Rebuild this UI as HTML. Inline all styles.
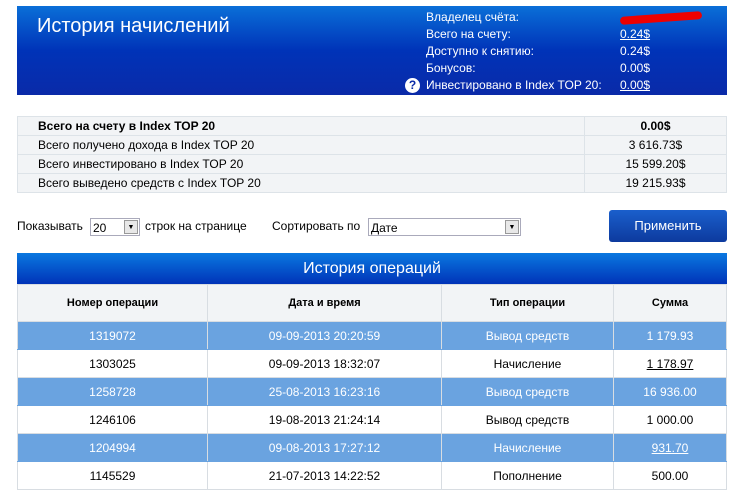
<!DOCTYPE html><html><head><meta charset="utf-8"><style>
body{margin:0;background:#fff;font-family:"Liberation Sans",Arial,sans-serif;font-size:12px;color:#000;width:739px;height:489px;overflow:hidden;position:relative}
.hdr{position:absolute;left:17px;top:6px;width:710px;height:89px;background:linear-gradient(#0a6fd8,#0033b8 50%,#0a2aa8)}
.hdr h1{position:absolute;left:20px;top:9px;margin:0;font-weight:normal;font-size:20px;color:#fff}
.info{position:absolute;left:409px;top:3px;color:#fff;font-size:12px;line-height:17px}
.info div{position:relative;height:17px}
.info span.v{position:absolute;left:194px}
.u{text-decoration:underline}
.q{position:absolute;left:-21px;top:1px;width:15px;height:15px;border-radius:50%;background:#fff;color:#0a2aa8;font-weight:bold;font-size:12px;text-align:center;line-height:15px}
.sum{position:absolute;left:17px;top:116px;width:710px;border-collapse:collapse}
.sum td{border:1px solid #dde3e8;background:#f2f4f6;height:18px;padding:0 0 0 20px;font-size:12px}
.sum td.r{text-align:center;width:141px;padding:0}
.ctl{position:absolute;top:219px;font-size:12px}
.sel{position:absolute;top:218px;height:18px;border:1px solid #aab;background:#fff;font-size:12px;line-height:18px;padding-left:2px;box-sizing:border-box}
.arr{position:absolute;right:1px;top:1px;width:14px;height:14px;background:#e8e8e8;border:1px solid #999;box-sizing:border-box;font-size:7px;text-align:center;line-height:13px}
.btn{position:absolute;left:609px;top:210px;width:118px;height:32px;border-radius:3px;background:linear-gradient(#1a5fcc,#0d3a9e);color:#fff;text-align:center;line-height:32px;font-size:13px}
.th{position:absolute;left:17px;top:253px;width:710px;height:31px;background:linear-gradient(#0a78e0,#0033b8);color:#fff;text-align:center;line-height:31px;font-size:16px}
.ops{position:absolute;left:17px;top:284px;width:710px;border-collapse:collapse;table-layout:fixed}
.ops td{border:1px solid #d8dde2;text-align:center;height:27px;padding:0;font-size:12px}
.ops tr.h td{background:#f2f4f6;font-weight:bold;height:36px;font-size:11px}
.ops tr.b td{background:#6aa3e0;color:#fff;border-color:#6aa3e0 #d8dde2}
</style></head><body>
<div class="hdr"><h1>История начислений</h1>
<div class="info">
<div>Владелец счёта:<span class="v u" style="color:#e00;background:#e00;width:82px;height:8px;top:5px;border-radius:4px;transform:rotate(-4deg)"></span></div>
<div>Всего на счету:<span class="v u">0.24$</span></div>
<div>Доступно к снятию:<span class="v">0.24$</span></div>
<div>Бонусов:<span class="v">0.00$</span></div>
<div><span class="q">?</span>Инвестировано в Index TOP 20:<span class="v u">0.00$</span></div>
</div></div>
<table class="sum">
<tr><td style="font-weight:bold">Всего на счету в Index TOP 20</td><td class="r" style="font-weight:bold">0.00$</td></tr>
<tr><td>Всего получено дохода в Index TOP 20</td><td class="r">3 616.73$</td></tr>
<tr><td>Всего инвестировано в Index TOP 20</td><td class="r">15 599.20$</td></tr>
<tr><td>Всего выведено средств с Index TOP 20</td><td class="r">19 215.93$</td></tr>
</table>
<div class="ctl" style="left:17px">Показывать</div>
<div class="sel" style="left:90px;width:50px">20<div class="arr">▼</div></div>
<div class="ctl" style="left:145px">строк на странице</div>
<div class="ctl" style="left:272px">Сортировать по</div>
<div class="sel" style="left:368px;width:153px">Дате<div class="arr">▼</div></div>
<div class="btn">Применить</div>
<div class="th">История операций</div>
<table class="ops">
<col style="width:190px"><col style="width:234px"><col style="width:172px"><col>
<tr class="h"><td>Номер операции</td><td>Дата и время</td><td>Тип операции</td><td>Сумма</td></tr>
<tr class="b"><td>1319072</td><td>09-09-2013 20:20:59</td><td>Вывод средств</td><td>1 179.93</td></tr>
<tr><td>1303025</td><td>09-09-2013 18:32:07</td><td>Начисление</td><td><span class="u">1 178.97</span></td></tr>
<tr class="b"><td>1258728</td><td>25-08-2013 16:23:16</td><td>Вывод средств</td><td>16 936.00</td></tr>
<tr><td>1246106</td><td>19-08-2013 21:24:14</td><td>Вывод средств</td><td>1 000.00</td></tr>
<tr class="b"><td>1204994</td><td>09-08-2013 17:27:12</td><td>Начисление</td><td><span class="u">931.70</span></td></tr>
<tr><td>1145529</td><td>21-07-2013 14:22:52</td><td>Пополнение</td><td>500.00</td></tr>
</table>
</body></html>
